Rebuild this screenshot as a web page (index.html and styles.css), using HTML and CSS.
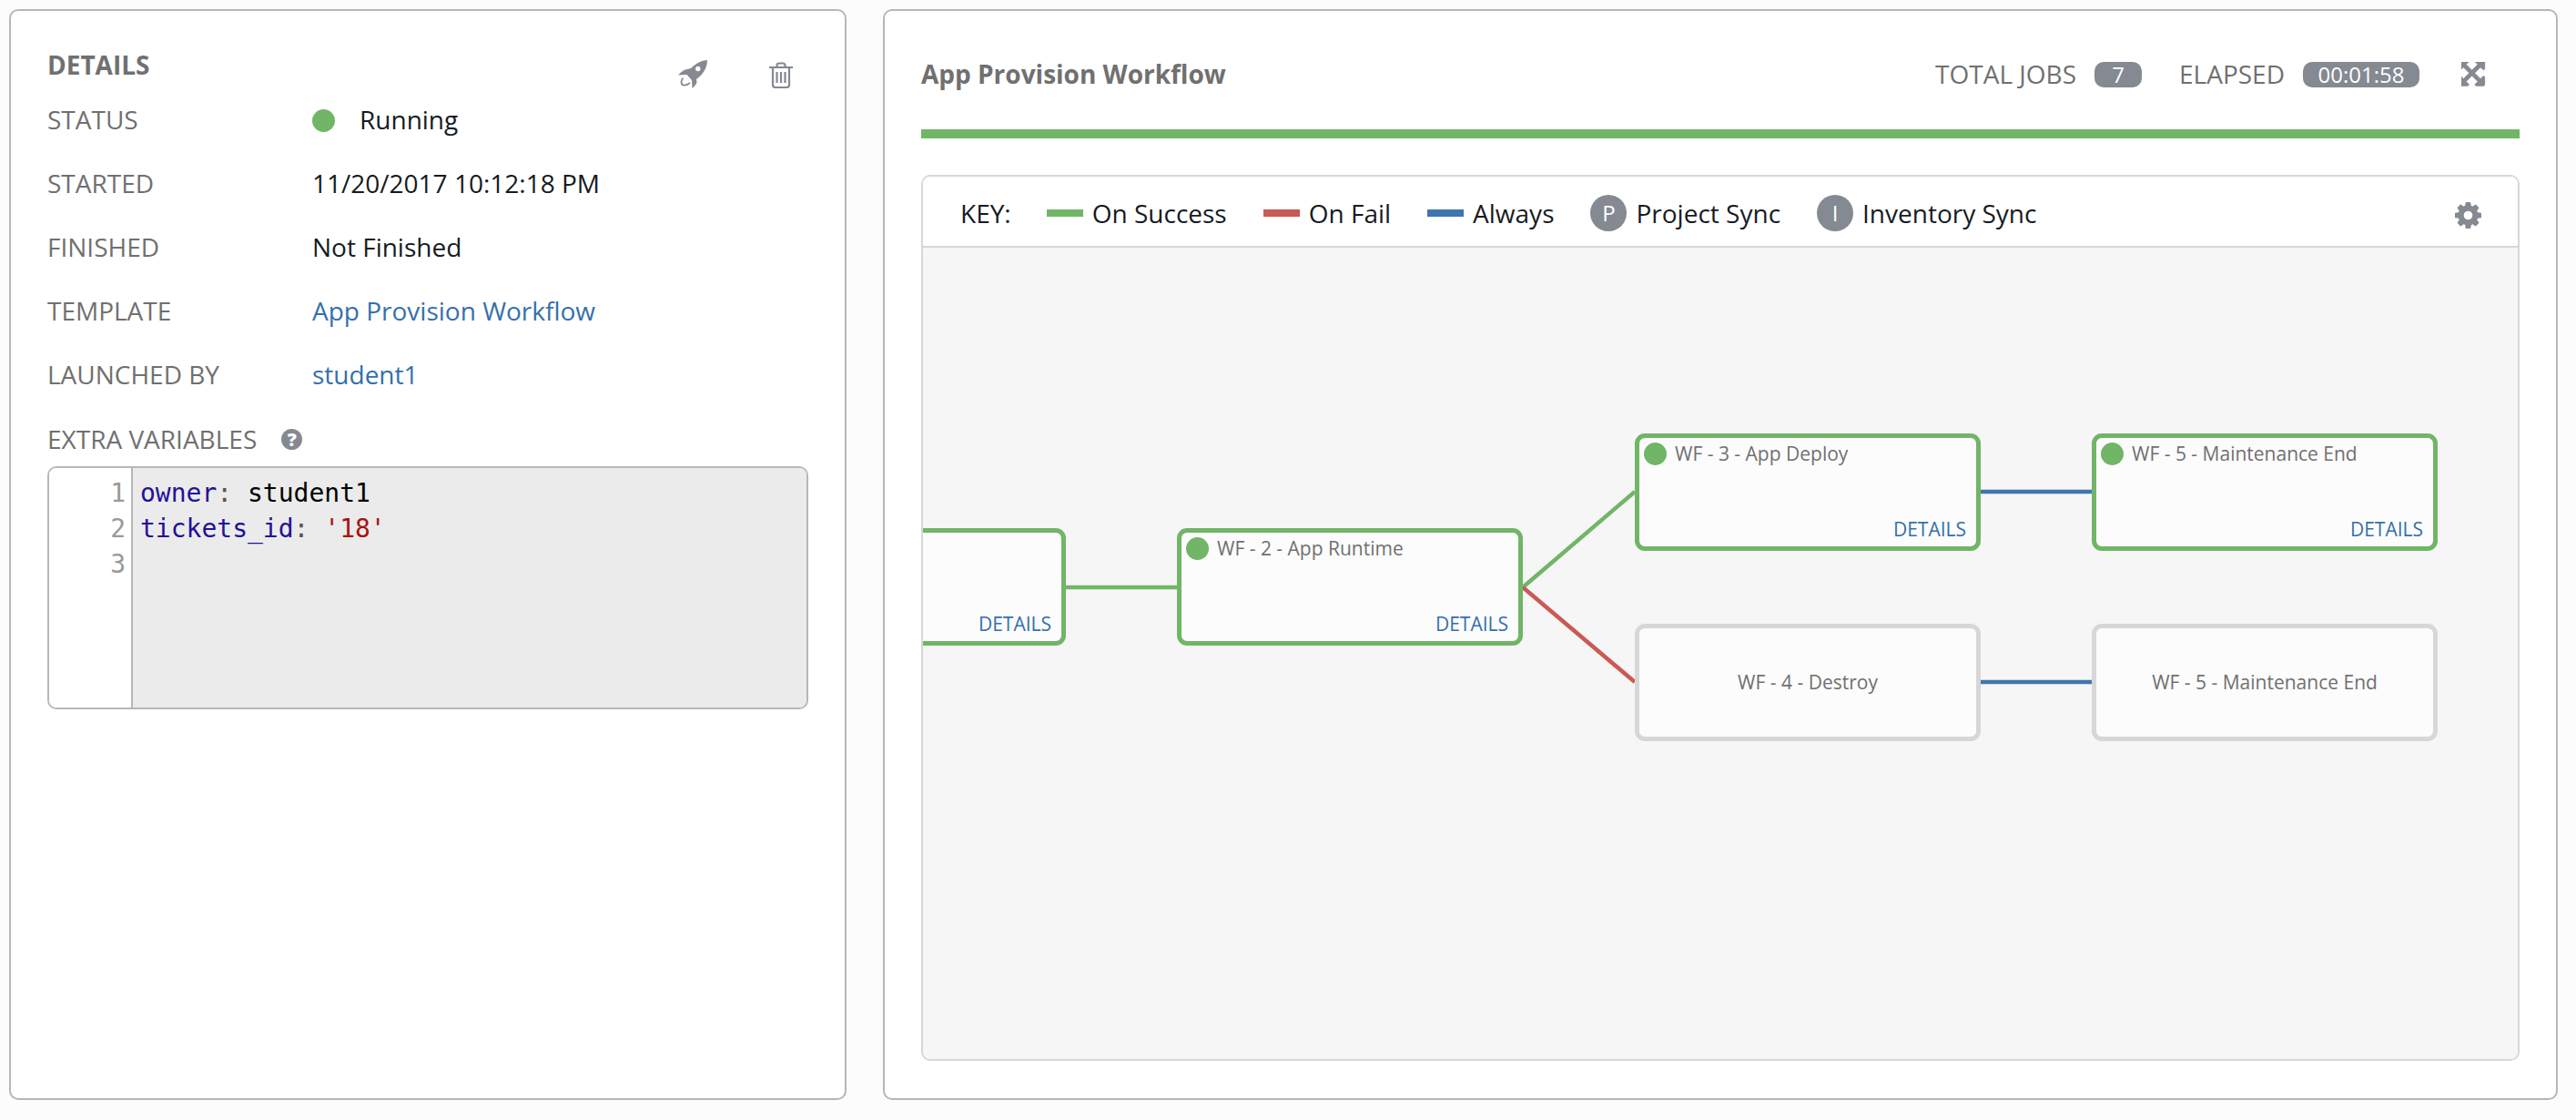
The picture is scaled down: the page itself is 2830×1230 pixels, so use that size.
FILE: index.html
```html
<!DOCTYPE html>
<html lang="en">
<head>
<meta charset="utf-8">
<title>App Provision Workflow</title>
<link rel="stylesheet" href="styles.css">
</head>
<body>
<main class="page">
  <section class="panel details">
    <header class="details-head">
      <h2 class="details-title">DETAILS</h2>
      <div class="details-actions">
        <svg class="icon-rocket" viewBox="0 0 32 32" aria-hidden="true"><path class="fill-grey" fill-rule="evenodd" d="M32 0C26 .5 19 3.500 14 9L8 10.500C5 11.500 2 14 0 16.500L9.500 16 15 22 15.500 31C18 29 20 26.500 20.500 24L20 21C27 16 32 9 32 0ZM21.800 6.800a2.700 2.700 0 1 1 0 5.400 2.700 2.700 0 0 1 0-5.400Z"/><path class="stroke-ring" d="M5.500 19.500C2.500 23 3 27 6 27.500 8 28 10.500 27 13 25"/></svg>
        <svg class="icon-trash" viewBox="0 0 26 29" aria-hidden="true"><path class="stroke-grey" d="M0 6H26M4 6V25Q4 28 7 28H19Q22 28 22 25V6M8.500 6V4Q8.500 1.500 11 1.500H15Q17.500 1.500 17.500 4V6M8.500 11V23M13 11V23M17.500 11V23"/></svg>
      </div>
    </header>
    <div class="row"><span class="label">STATUS</span><span class="value"><i class="dot dot-status"></i>Running</span></div>
    <div class="row"><span class="label">STARTED</span><span class="value">11/20/2017 10:12:18 PM</span></div>
    <div class="row"><span class="label">FINISHED</span><span class="value">Not Finished</span></div>
    <div class="row"><span class="label">TEMPLATE</span><a class="value link" href="#">App Provision Workflow</a></div>
    <div class="row"><span class="label">LAUNCHED BY</span><a class="value link" href="#">student1</a></div>
    <div class="vars-label"><span class="label">EXTRA VARIABLES</span><span class="help">?</span></div>
    <div class="code">
      <div class="gutter"><div>1</div><div>2</div><div>3</div></div>
      <pre class="editor"><span class="atom">owner</span><span class="meta">:</span> student1
<span class="atom">tickets_id</span><span class="meta">:</span> <span class="str">'18'</span></pre>
    </div>
  </section>

  <section class="panel workflow">
    <header class="wf-head">
      <h2 class="wf-title">App Provision Workflow</h2>
      <div class="wf-stats">
        <span class="stat-label">TOTAL JOBS</span><span class="badge badge-jobs">7</span>
        <span class="stat-label stat-elapsed">ELAPSED</span><span class="badge badge-time">00:01:58</span>
        <svg class="icon-expand" viewBox="128 128 1536 1536" aria-hidden="true"><path class="fill-grey fatten" d="M1283 413l-355 355 355 355 144-144q29-31 70-14 39 17 39 59v448q0 26-19 45t-45 19h-448q-42 0-59-40-17-39 14-69l144-144-355-355-355 355 144 144q31 30 14 69-17 40-59 40h-448q-26 0-45-19t-19-45v-448q0-42 40-59 39-17 69 14l144 144 355-355-355-355-144 144q-19 19-45 19-12 0-24-5-40-17-40-59v-448q0-26 19-45t45-19h448q42 0 59 40 17 39-14 69l-144 144 355 355 355-355-144-144q-31-30-14-69 17-40 59-40h448q26 0 45 19t19 45v448q0 42-39 59-13 5-25 5-26 0-45-19z"/></svg>
      </div>
    </header>
    <div class="progress"></div>
    <div class="graph">
      <div class="key">
        <span class="key-title">KEY:</span>
        <i class="swatch swatch-green"></i><span class="key-text key-success">On Success</span>
        <i class="swatch swatch-red"></i><span class="key-text key-fail">On Fail</span>
        <i class="swatch swatch-blue"></i><span class="key-text key-always">Always</span>
        <i class="key-circle">P</i><span class="key-text key-project">Project Sync</span>
        <i class="key-circle">I</i><span class="key-text">Inventory Sync</span>
        <svg class="icon-gear" viewBox="128 128 1536 1536" aria-hidden="true"><path class="fill-grey" d="M1152 896q0-106-75-181t-181-75-181 75-75 181 75 181 181 75 181-75 75-181zm512-109v222q0 12-8 23t-20 13l-185 28q-19 54-39 91 35 50 107 138 10 12 10 25t-9 23q-27 37-99 108t-94 71q-12 0-26-9l-138-108q-44 23-91 38-16 136-29 186-7 28-36 28h-222q-14 0-24.500-8.500t-11.500-21.500l-28-184q-49-16-90-37l-141 107q-10 9-25 9-14 0-25-11-126-114-165-168-7-10-7-23 0-12 8-23 15-21 51-66.500t54-70.500q-27-50-41-99l-183-27q-13-2-21-12.500t-8-23.500v-222q0-12 8-23t19-13l186-28q14-46 39-92-40-57-107-138-10-12-10-24 0-10 9-23 26-36 98.500-107.500t94.500-71.500q13 0 26 10l138 107q44-23 91-38 16-136 29-186 7-28 36-28h222q14 0 24.500 8.500t11.500 21.500l28 184q49 16 90 37l142-107q9-9 24-9 13 0 25 10 129 119 165 170 7 8 7 22 0 12-8 23-15 21-51 66.500t-54 70.500q26 50 41 98l183 28q13 2 21 12.500t8 23.500z"/></svg>
      </div>
      <div class="canvas">
        <svg class="edges" aria-hidden="true">
          <line class="edge edge-green" x1="150" y1="373" x2="285" y2="373"/>
          <line class="edge edge-green" x1="659" y1="373" x2="782" y2="268"/>
          <line class="edge edge-red" x1="659" y1="373" x2="782" y2="477"/>
          <line class="edge edge-blue" x1="1160" y1="268" x2="1287" y2="268"/>
          <line class="edge edge-blue" x1="1160" y1="477" x2="1287" y2="477"/>
        </svg>
        <div class="node node-done node-a"><a class="node-link" href="#">DETAILS</a></div>
        <div class="node node-done node-b"><div class="node-name"><i class="dot"></i><span class="node-text">WF - 2 - App Runtime</span></div><a class="node-link" href="#">DETAILS</a></div>
        <div class="node node-done node-c"><div class="node-name"><i class="dot"></i><span class="node-text">WF - 3 - App Deploy</span></div><a class="node-link" href="#">DETAILS</a></div>
        <div class="node node-done node-d"><div class="node-name"><i class="dot"></i><span class="node-text">WF - 5 - Maintenance End</span></div><a class="node-link" href="#">DETAILS</a></div>
        <div class="node node-idle node-e">WF - 4 - Destroy</div>
        <div class="node node-idle node-f">WF - 5 - Maintenance End</div>
      </div>
    </div>
  </section>
</main>
</body>
</html>
```
FILE: styles.css
```css
* { box-sizing: border-box; }
html, body { margin: 0; height: 100%; }
body {
  background: #fcfcfc;
  color: #161b1f;
  font-family: "Open Sans", "Liberation Sans", sans-serif;
  font-size: 28px;
}
.page {
  display: flex;
  gap: 40px;
  height: 1230px;
  padding: 10px 20px 22px 10px;
}
.panel {
  background: #fff;
  border: 2px solid #b7b7b7;
  border-radius: 10px;
}
.details { width: 920px; padding: 40px 40px 0; }
.details-head { display: flex; justify-content: space-between; height: 44px; }
.details-title { margin: 0; font-size: 28px; line-height: 38px; font-weight: 700; color: #707070; }
.details-actions { display: flex; gap: 68px; padding: 14px 17px 0 0; align-items: flex-start; }
.icon-rocket { width: 32px; height: 32px; display: block; }
.icon-trash { width: 26px; height: 29px; display: block; margin-top: 2px; }
.fill-grey { fill: #848992; }
.fatten { stroke: #848992; stroke-width: 50; }
.stroke-grey { fill: none; stroke: #848992; stroke-width: 2.200; }
.stroke-ring { fill: none; stroke: #848992; stroke-width: 1.800; }
.row { display: flex; align-items: center; height: 70px; }
.label { color: #707070; display: block; }
.row .label { width: 291px; }
.value { display: flex; align-items: center; color: #161b1f; }
.link { color: #3570ab; text-decoration: none; }
.dot { display: block; width: 25px; height: 25px; border-radius: 50%; background: #71b567; flex: none; }
.dot-status { margin: 2px 27px 0 0; }
.vars-label { display: flex; align-items: center; height: 66px; padding-top: 6px; }
.help {
  width: 23px; height: 23px; margin: 1px 0 0 27px; border-radius: 50%;
  background: #848992; color: #fff;
  font-size: 20px; font-weight: 800; line-height: 23px; text-align: center;
}
.code {
  display: flex;
  height: 267px;
  border: 2px solid #b7b7b7;
  border-radius: 10px;
  overflow: hidden;
  font-family: "DejaVu Sans Mono", "Liberation Mono", monospace;
  font-size: 28px;
  line-height: 39.200px;
}
.gutter { width: 92px; padding: 8px 6px 0 0; text-align: right; color: #999; background: #fff; border-right: 2px solid #b7b7b7; flex: none; }
.editor { flex: 1; margin: 0; padding: 8px 0 0 8px; background: #ebebeb; font: inherit; color: #000; }
.atom { color: #221199; }
.meta { color: #555; }
.str { color: #aa1111; }

.workflow { width: 1840px; padding: 40px 40px 41px; display: flex; flex-direction: column; }
.wf-head { display: flex; justify-content: space-between; align-items: center; height: 60px; padding-bottom: 2px; margin-bottom: 30px; }
.wf-title { margin: 0; font-size: 28px; font-weight: 700; color: #707070; }
.wf-stats { display: flex; align-items: center; }
.stat-label { color: #707070; }
.stat-elapsed { margin-left: 41px; }
.badge {
  height: 28px; margin: 2px 0 0 20px; border-radius: 10px;
  background: #848992; color: #fff;
  font-size: 24px; line-height: 28px; text-align: center;
}
.badge-jobs { width: 52px; }
.badge-time { width: 128px; }
.icon-expand { width: 28px; height: 29px; margin: 2px 36px 0 46px; display: block; }
.progress { height: 10px; background: #71b567; margin-bottom: 40px; }
.graph {
  flex: 1;
  display: flex;
  flex-direction: column;
  border: 2px solid #d7d7d7;
  border-radius: 10px;
  overflow: hidden;
}
.key {
  display: flex;
  align-items: center;
  height: 78px;
  padding: 3px 40px 0 41px;
  border-bottom: 2px solid #d7d7d7;
  background: #fff;
  flex: none;
}
.key-title { margin-right: 39px; }
.swatch { display: block; width: 40px; height: 8px; margin-right: 10px; }
.swatch-green { background: #71b567; }
.swatch-red { background: #c95a55; }
.swatch-blue { background: #4076b0; }
.key-success, .key-fail, .key-always { margin-right: 40px; }
.key-project { margin-right: 40px; }
.key-circle {
  display: block; width: 40px; height: 40px; margin-right: 10px; border-radius: 50%;
  background: #848992; color: #fff;
  font-style: normal; font-size: 24px; line-height: 40px; text-align: center;
}
.icon-gear { width: 29px; height: 29px; margin: 6px 0 0 auto; display: block; }
.canvas { position: relative; flex: 1; background: #f6f6f6; }
.edges { position: absolute; left: 0; top: 0; width: 100%; height: 100%; }
.edge { stroke-width: 4.500; }
.edge-green { stroke: #71b567; }
.edge-red { stroke: #c95a55; }
.edge-blue { stroke: #4076b0; }
.node {
  position: absolute;
  width: 380px;
  height: 129px;
  border: 5px solid;
  border-radius: 11px;
  background: #fcfcfc;
  font-size: 21px;
  color: #707070;
}
.node-done { border-color: #71b567; display: flex; flex-direction: column; justify-content: space-between; padding: 5px 11px 4px 5px; }
.node-idle { border-color: #d7d7d7; display: flex; align-items: center; justify-content: center; padding-bottom: 1px; }
.node-name { display: flex; align-items: center; gap: 9px; height: 25px; }
.node-text { margin-top: -2px; }
.node-link { align-self: flex-end; color: #3570ab; text-decoration: none; line-height: 30px; margin-top: auto; }
.node-a { left: -223px; top: 308px; }
.node-b { left: 279px; top: 308px; }
.node-c { left: 782px; top: 204px; }
.node-d { left: 1284px; top: 204px; }
.node-e { left: 782px; top: 413px; }
.node-f { left: 1284px; top: 413px; }
```
